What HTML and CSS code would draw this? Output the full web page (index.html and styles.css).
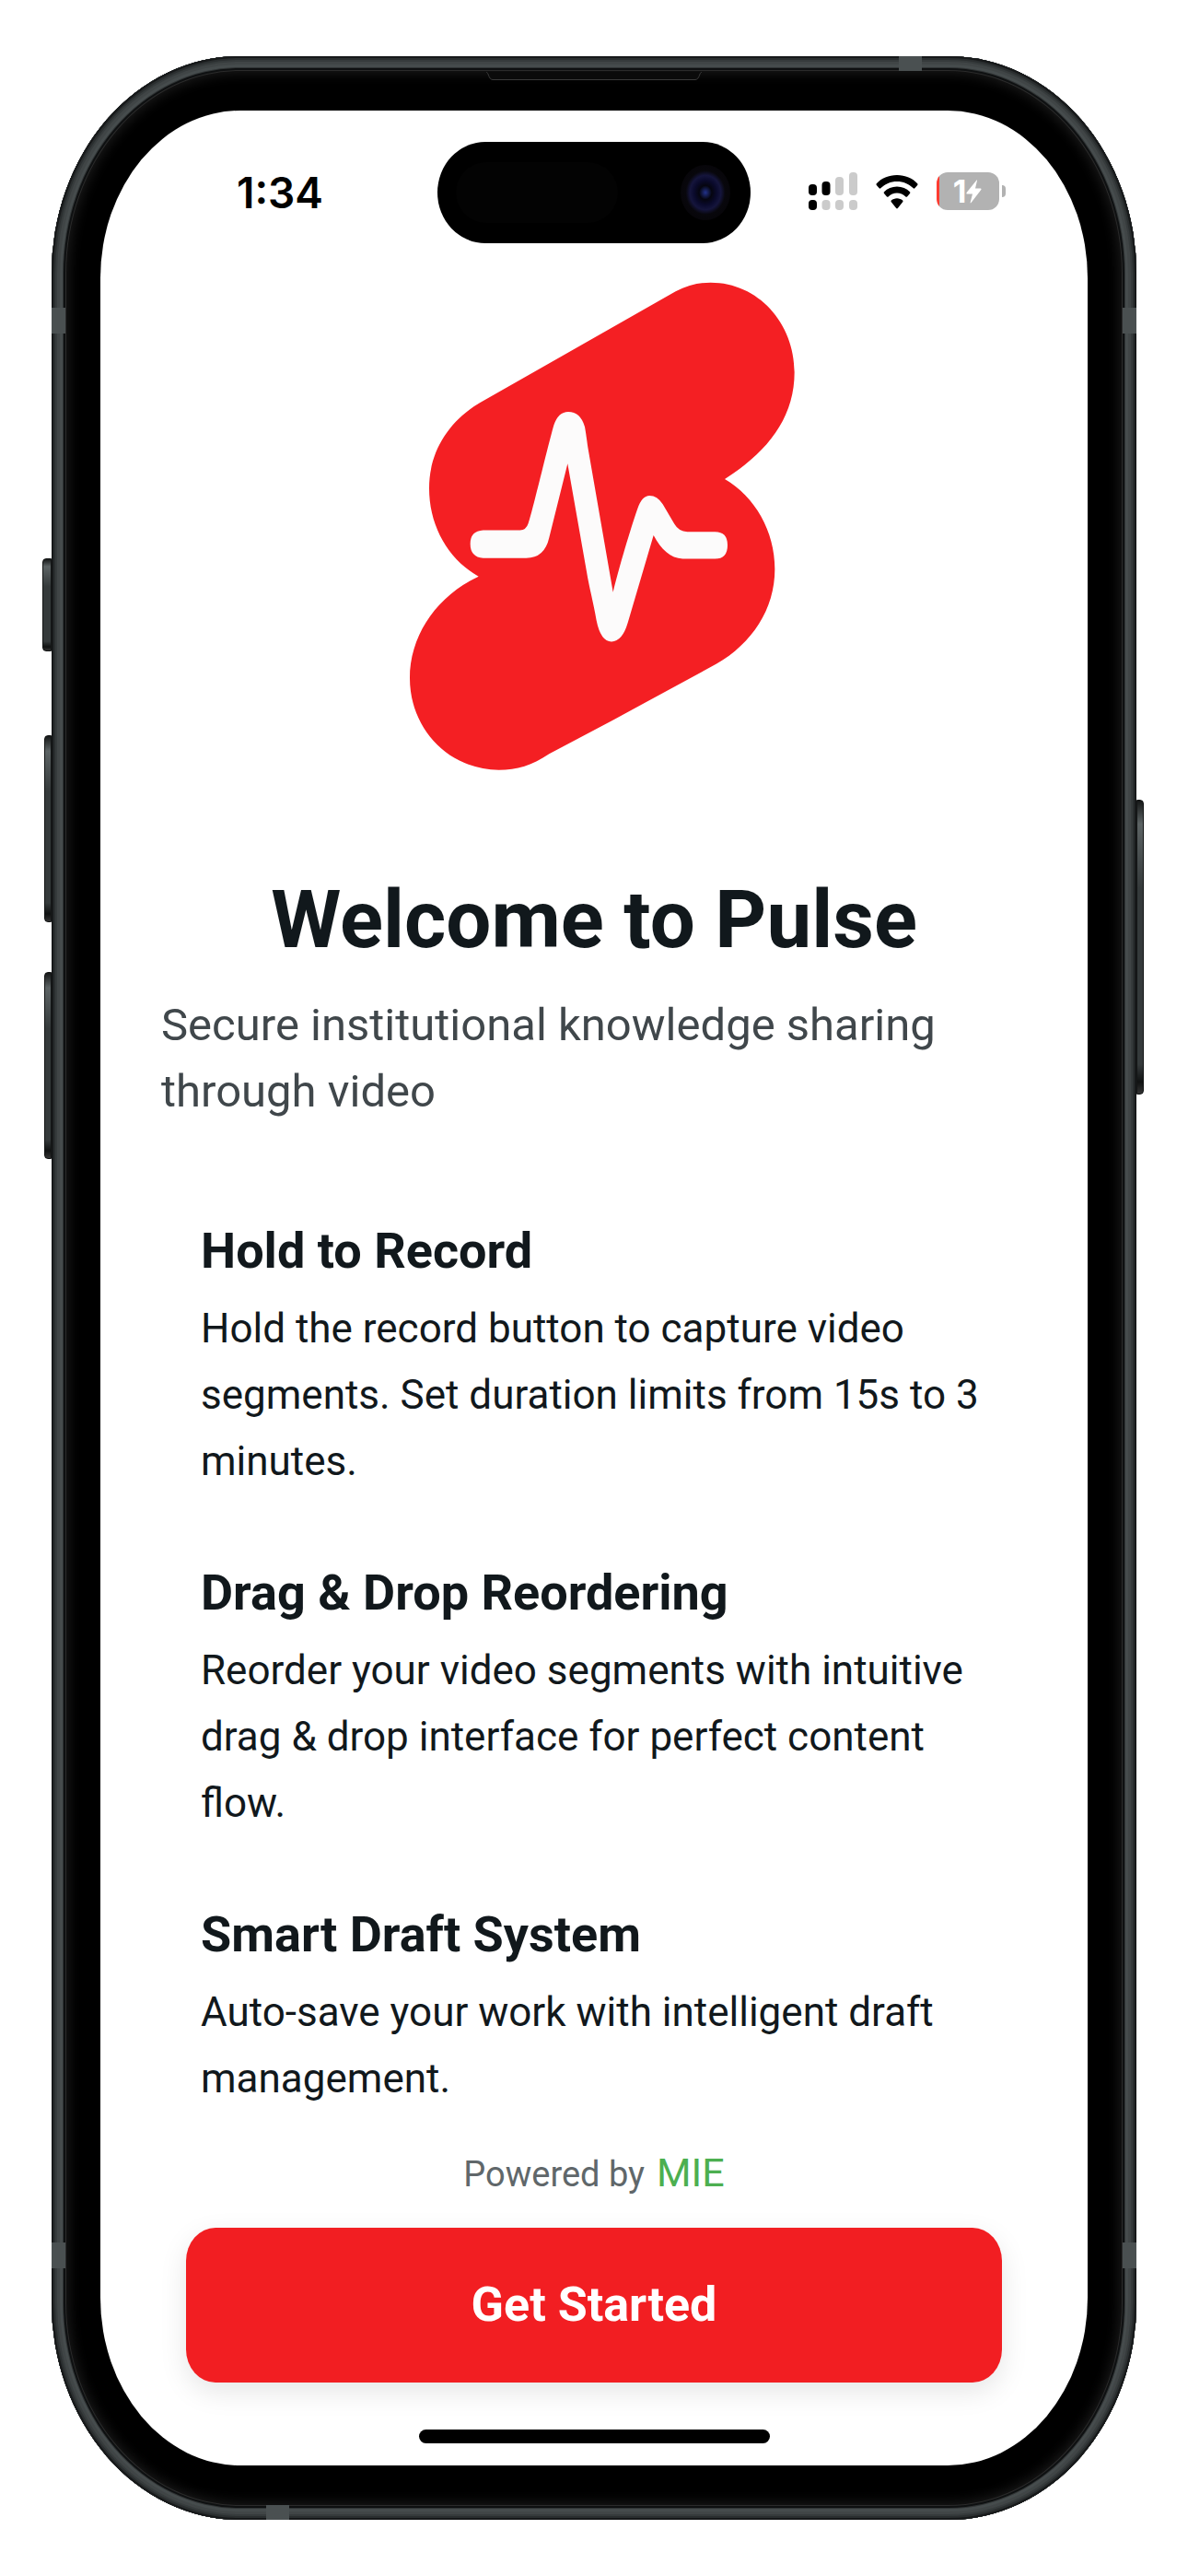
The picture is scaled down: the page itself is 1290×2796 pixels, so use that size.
FILE: index.html
```html
<!DOCTYPE html>
<html lang="en">
<head>
<meta charset="utf-8">
<meta name="viewport" content="width=device-width, initial-scale=1">
<title>Welcome to Pulse</title>
<link rel="stylesheet" href="styles.css">
</head>
<body>
<div class="stage">
  <div class="device">
    <span class="key key-action"></span>
    <span class="key key-up"></span>
    <span class="key key-down"></span>
    <span class="key key-power"></span>
    <span class="band band-side band-left band-high"></span>
    <span class="band band-side band-right band-high"></span>
    <span class="band band-side band-left band-low"></span>
    <span class="band band-side band-right band-low"></span>
    <span class="band band-flat band-top"></span>
    <span class="band band-flat band-bottom"></span>
    <svg class="earpiece" viewBox="0 0 234 10" aria-hidden="true"><path d="M0 0C3 1 2 8 7 8.500H227C232 8 231 1 234 0" fill="#0b0b0b" stroke="#3a3a3a"/></svg>

    <div class="screen">
      <header class="status">
        <time class="clock">1:34</time>
        <div class="island">
          <span class="sensor"></span>
          <span class="camera"></span>
        </div>
        <div class="indicators">
          <svg class="signal" viewBox="0 0 53 41" role="img" aria-label="Signal">
            <g fill="#000"><rect x="0" y="13" width="9" height="12" rx="4"/><rect x="14.500" y="10" width="9" height="15" rx="4"/><rect x="0" y="30" width="9" height="11" rx="4"/></g>
            <g fill="#cbcbcb"><rect x="29" y="5" width="9" height="20" rx="4"/><rect x="44" y="0" width="9" height="25" rx="4"/><rect x="14.500" y="30" width="9" height="11" rx="4"/><rect x="29" y="30" width="9" height="11" rx="4"/><rect x="44" y="30" width="9" height="11" rx="4"/></g>
          </svg>
          <svg class="wifi" viewBox="0 0 46 38" role="img" aria-label="Wi-Fi">
            <path d="M23 1C14 1 6 4.500.8 10.200Q0 11 .8 12L3.700 15.300Q4.500 16 5.300 15.300C10 10.700 16 8 23 8S36 10.700 40.700 15.300Q41.500 16 42.300 15.300L45.200 12Q46 11 45.200 10.200C40 4.500 32 1 23 1Z"/>
            <path d="M23 13.500C17.500 13.500 12.600 15.600 9 19.200Q8.200 20 9 21L12 24.500Q12.800 25.200 13.600 24.500C16.200 22 19.400 20.600 23 20.600S29.800 22 32.400 24.500Q33.200 25.200 34 24.500L37 21Q37.800 20 37 19.200C33.400 15.600 28.500 13.500 23 13.500Z"/>
            <path d="M23 26.300C20.600 26.300 18.500 27.200 16.800 28.600Q16 29.400 16.800 30.300L22.200 37Q23 37.800 23.800 37L29.200 30.300Q30 29.400 29.200 28.600C27.500 27.200 25.400 26.300 23 26.300Z"/>
          </svg>
          <div class="battery">
            <span class="charge">1</span>
            <svg class="bolt" viewBox="0 0 17 26" aria-hidden="true"><path d="M11.500.5Q12 0 12 1L10 9.500H16Q17 10 16.300 11L5.500 25Q4.500 26 4.700 24.500L7 15.500H.8Q0 15 .6 14Z" fill="#fff"/></svg>
          </div>
        </div>
      </header>

      <main class="content">
        <svg class="logo" viewBox="70 70 1260 1432" preserveAspectRatio="none" role="img" aria-label="Pulse">
          <path fill="#f41f23" d="M942 98C980 80 1018 72 1056 72C1210 72 1329 190 1329 335C1329 470 1240 570 1102 648C1200 700 1265 800 1265 912C1265 1030 1190 1130 1075 1190L740 1354L530 1454C475 1488 425 1501 366 1501C205 1501 76 1382 76 1232C76 1105 165 990 300 934C200 882 139 785 139 675C139 570 200 480 305 424L590 278Z"/>
          <path fill="#fcfbfb" d="M315 798H435Q455 798 462 778C475 745 520 570 545 490Q560 451 592 451Q632 451 646 495C650 515 652 530 656 555L738 980C760 900 795 795 818 735Q832 697 857 697Q882 697 900 722L938 780Q952 802 980 803H1070Q1111 803 1111 842Q1111 882 1070 882H965C925 880 895 855 870 813L786 1070Q768 1125 733 1125Q698 1125 684 1063C674 1010 660 965 652 920L590 603L530 820Q515 880 455 880H315Q273 877 273 838Q273 800 315 798Z"/>
        </svg>

        <h1 class="title">Welcome to Pulse</h1>
        <p class="subtitle">Secure institutional knowledge sharing through video</p>

        <div class="features">
          <section class="feature">
            <h2>Hold to Record</h2>
            <p>Hold the record button to capture video segments. Set duration limits from 15s to 3 minutes.</p>
          </section>
          <section class="feature">
            <h2>Drag &amp; Drop Reordering</h2>
            <p>Reorder your video segments with intuitive drag &amp; drop interface for perfect content flow.</p>
          </section>
          <section class="feature">
            <h2>Smart Draft System</h2>
            <p>Auto-save your work with intelligent draft management.</p>
          </section>
        </div>
      </main>

      <footer class="footer">
        <p class="powered">Powered by <a href="#mie">MIE</a></p>
        <button class="start" type="button">Get Started</button>
        <div class="home-bar"></div>
      </footer>
    </div>
  </div>
</div>
</body>
</html>
```
FILE: styles.css
```css
* { box-sizing: border-box; }

body {
  margin: 0;
  background: #fff;
  color: #11181c;
  font-family: Roboto, "Liberation Sans", sans-serif;
}

h1, h2, p { margin: 0; }

.stage { padding: 61px 56px; }

/* Phone body: the metal rim is built from stacked inset rings */
.device {
  position: relative;
  padding: 59px 53px;
  border-radius: 204px / 236px;
  background: #000;
  box-shadow:
    inset 0 0 0 2px #17191a,
    inset 0 0 0 4px #2a2e2f,
    inset 0 0 0 6px #363b3c,
    inset 0 0 0 9px #404546,
    inset 0 0 0 12px #464c4d,
    inset 0 0 0 13px #303435,
    inset 0 0 0 15px #0e1011,
    inset 0 0 0 16px #2b2b2b,
    inset 0 0 14px 18px #1c1c1c;
}

.key {
  position: absolute;
  width: 8px;
  border: 1px solid #121414;
  background: linear-gradient(#151717, #5c6364 8%, #353a3b 30%, #353a3b 90%, #101212 96%, #333);
}
.key-action, .key-up, .key-down { right: 100%; border-radius: 4px 0 0 4px; }
.key-action { top: 545px; width: 10px; height: 101px; }
.key-up { top: 737px; height: 203px; }
.key-down { top: 994px; height: 203px; }
.key-power { top: 807px; left: 100%; height: 320px; border-radius: 0 4px 4px 0; }

.band { position: absolute; background: #4a5051; }
.band-side { width: 15px; height: 28px; }
.band-flat { width: 25px; height: 16px; }
.band-left { left: 0; }
.band-right { right: 0; }
.band-high { top: 273px; }
.band-low { bottom: 273px; }
.band-top { top: 0; right: 233px; }
.band-bottom { bottom: 0; left: 233px; }

.earpiece {
  position: absolute;
  top: 17px;
  left: 50%;
  width: 234px;
  height: 10px;
  margin-left: -117px;
}

.screen {
  overflow: hidden;
  padding: 34px 0 24px;
  border-radius: 152px / 182px;
  background: #fff;
}

.status {
  display: grid;
  grid-template-columns: 1fr 340px 1fr;
  align-items: center;
}

.clock {
  padding-left: 24px;
  font: 600 46px/52px Inter, sans-serif;
  color: #000;
  text-align: center;
}

.island {
  display: flex;
  align-items: center;
  justify-content: space-between;
  height: 110px;
  padding: 0 22px 0 20px;
  border-radius: 52px / 55px;
  background: #000;
}
.sensor { width: 176px; height: 66px; border-radius: 33px; background: #030303; }
.camera {
  width: 54px;
  height: 60px;
  border-radius: 50%;
  background: radial-gradient(ellipse, #22328a 0, #05050f 18%, #0a0a2c 32%, #15153c 44%, #08070c 56%, #050305 100%);
}

.indicators {
  display: flex;
  align-items: center;
  justify-content: center;
  gap: 20px;
  padding: 0 34px 3px 0;
}
.signal { width: 53px; height: 41px; }
.wifi { width: 46px; height: 38px; }

.battery {
  position: relative;
  display: flex;
  align-items: center;
  justify-content: center;
  width: 68px;
  height: 41px;
  border-radius: 12px;
  background: linear-gradient(90deg, #ff3b30 3px, #b2b2b2 3px);
}
.battery::after {
  content: "";
  position: absolute;
  left: 71px;
  width: 4px;
  height: 13px;
  border-radius: 0 4px 4px 0;
  background: #b2b2b2;
}
.charge { font: 700 34px/40px Inter, sans-serif; color: #fff; }
.bolt { width: 17px; height: 26px; }

.content { padding: 42px 66px 0; }

.logo {
  display: block;
  width: 436px;
  height: 530px;
  margin: 0 auto;
  padding-left: 16px;
}

.title {
  margin-top: 114px;
  font-size: 87px;
  line-height: 96px;
  text-align: center;
}

.subtitle {
  margin-top: 31px;
  font-size: 49px;
  line-height: 72px;
  color: #40474b;
}

.features {
  display: grid;
  gap: 71px;
  padding: 101px 43px 0;
}
.feature h2 { font-size: 54px; line-height: 72px; }
.feature p { margin-top: 12px; font-size: 44px; line-height: 72px; }

.footer {
  display: flex;
  flex-direction: column;
  align-items: center;
  padding: 38px 93px 0;
}

.powered {
  display: flex;
  align-items: baseline;
  gap: 13px;
  font-size: 38px;
  line-height: 56px;
  color: #60676a;
}
.powered a { font-size: 43px; color: #4caf50; text-decoration: none; }

.start {
  width: 100%;
  height: 168px;
  margin-top: 30px;
  border: 0;
  border-radius: 32px / 36px;
  background: #f21e22;
  box-shadow: 0 10px 30px rgba(0, 0, 0, 0.1);
  color: #fff;
  font: 700 52px/72px Roboto, sans-serif;
}

.home-bar {
  width: 381px;
  height: 15px;
  margin-top: 51px;
  border-radius: 8px;
  background: #000;
}
```
